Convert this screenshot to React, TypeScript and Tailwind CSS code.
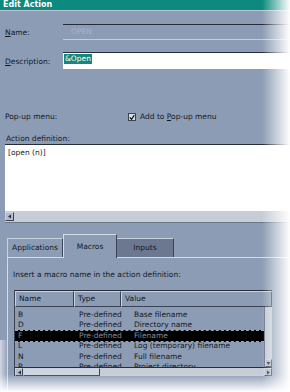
import React from 'react';

const rows = [
  { n: 'B', t: 'Pre-defined', v: 'Base filename' },
  { n: 'D', t: 'Pre-defined', v: 'Directory name' },
  { n: 'F', t: 'Pre-defined', v: 'Filename', sel: true },
  { n: 'L', t: 'Pre-defined', v: 'Log (temporary) filename' },
  { n: 'N', t: 'Pre-defined', v: 'Full filename' },
  { n: 'P', t: 'Pre-defined', v: 'Project directory' },
];

const Arrow = ({ dir }: { dir: 'left' | 'right' | 'down' }) => (
  <svg width="5" height="5" viewBox="0 0 5 5">
    {dir === 'left' && <path d="M1 2.5 L4 0.5 L4 4.5 Z" fill="#2a3040" />}
    {dir === 'right' && <path d="M4 2.5 L1 0.5 L1 4.5 Z" fill="#2a3040" />}
    {dir === 'down' && <path d="M2.5 4 L0.5 1 L4.5 1 Z" fill="#2a3040" />}
  </svg>
);

const App = () => {
  const raised = 'border-t border-l border-t-[#c9d3df] border-l-[#c9d3df] border-r border-b border-r-[#3a4254] border-b-[#3a4254]';

  return (
    <div
      className="relative w-[290px] h-[392px] overflow-hidden bg-[#8c9cb4] text-[#15191f] text-[7.5px] leading-[10px]"
      style={{ fontFamily: '"DejaVu Sans", "Liberation Sans", sans-serif' }}
    >
      {/* TITLE */}
      <div className="h-[10px] bg-[#0c8a80] border-b border-[#b9c6d4] box-content pl-[3px] text-white font-bold text-[8px] leading-[10px]">
        Edit Action
      </div>

      {/* NAME */}
      <div className="flex items-center mt-[13px] h-[16px]">
        <span className="w-[63px] pl-[5px] pt-[2px]">
          <u>N</u>ame:
        </span>
        <div className="flex-1 h-[16px] border-t border-[#262c3a] border-b border-b-[#c3ceda] pl-[8px] text-[#aab6c6] leading-[14px]">
          OPEN
        </div>
      </div>

      {/* DESCRIPTION */}
      <div className="flex items-center mt-[12px] h-[17px]">
        <span className="w-[63px] pl-[5px] pt-[2px]">
          <u>D</u>escription:
        </span>
        <div className="flex-1 h-[17px] bg-white border-t border-[#262c3a] pl-[1px] pt-[1px]">
          <span className="inline-block bg-[#14897b] text-white px-[1px] leading-[10px]">&amp;Open</span>
        </div>
      </div>

      {/* POP-UP */}
      <div className="flex items-center mt-[43px] h-[10px]">
        <span className="w-[128px] pl-[5px]">Pop-up menu:</span>
        <span className="w-[8px] h-[8px] bg-[#d5dce5] border border-[#3a4254] flex items-center justify-center">
          <svg width="7" height="7" viewBox="0 0 7 7">
            <path d="M1 3.5 L3 5.5 L6.2 0.8" stroke="#111" strokeWidth="1.4" fill="none" />
          </svg>
        </span>
        <span className="ml-[4px]">
          Add to <u>P</u>op-up menu
        </span>
      </div>

      {/* ACTION DEFINITION */}
      <div className="mt-[12px] pl-[6px] h-[10px]">Action definition:</div>
      <div className="ml-[5px] w-[285px]">
        <div className="h-[67px] bg-white border-t border-[#262c3a] pl-[3px] pt-[3px]">[open (n)]</div>
        <div className="h-[12px] bg-[#c6cdd7] flex items-center border-b border-[#6c7888]">
          <span className={`w-[9px] h-[9px] bg-[#b3bcc8] ${raised} flex items-center justify-center`}>
            <Arrow dir="left" />
          </span>
        </div>
      </div>

      {/* TABS */}
      <div className="flex items-end ml-[7px] mt-[10px] h-[24px]">
        <div className={`w-[56px] h-[19px] ${raised} border-b-0 flex items-center justify-center`}>Applications</div>
        <div className="w-[54px] h-[24px] border-t border-l border-[#d3dbe5] border-r border-r-[#3a4254] flex items-center justify-center bg-[#8c9cb4] relative top-[1px]">
          Macros
        </div>
        <div className="w-[57px] h-[19px] bg-[#6b7890] border-t border-[#c9d3df] border-r border-r-[#3a4254] flex items-center justify-center">
          Inputs
        </div>
      </div>

      {/* PANEL */}
      <div className="ml-[7px] border-t border-l border-[#d3dbe5] h-[140px]">
        <div className="pl-[5px] mt-[12px] h-[10px]">Insert a macro name in the action definition:</div>

        <div className="ml-[6px] mt-[10px] w-[258px] border-l border-[#3a4254]">
          {/* HEADER */}
          <div className="grid grid-cols-[59px_47px_1fr] h-[16px] border-t border-[#262c3a]">
            <div className={`${raised} pl-[3px] leading-[14px]`}>Name</div>
            <div className={`${raised} pl-[3px] leading-[14px]`}>Type</div>
            <div className={`${raised} pl-[3px] leading-[14px]`}>Value</div>
          </div>

          <div className="flex h-[61px] border-t border-[#262c3a]">
            <div className="flex-1 pt-[3px] overflow-hidden">
              {rows.map((r) => (
                <div
                  key={r.n}
                  className={
                    r.sel
                      ? 'grid grid-cols-[64px_55px_1fr] h-[10.4px] leading-[10.4px] bg-black text-[#7f8a99] border-y border-dashed border-[#9aa6b6] -mt-[1px] -mb-[1px] box-content'
                      : 'grid grid-cols-[64px_55px_1fr] h-[10.4px] leading-[10.4px]'
                  }
                >
                  <span className="pl-[3px]">{r.n}</span>
                  <span>{r.t}</span>
                  <span>{r.v}</span>
                </div>
              ))}
            </div>
            <div className="w-[8px] bg-[#c3cad5] border-l border-[#6c7888] flex flex-col justify-end">
              <span className={`h-[8px] bg-[#b3bcc8] ${raised} flex items-center justify-center`}>
                <Arrow dir="down" />
              </span>
            </div>
          </div>

          <div className="h-[9px] bg-[#c6cdd7] flex items-center border-t border-[#262c3a]">
            <span className={`w-[8px] h-[8px] bg-[#b3bcc8] ${raised} flex items-center justify-center`}>
              <Arrow dir="left" />
            </span>
            <span className={`w-[77px] h-[8px] bg-[#cfd5de] ${raised}`} />
            <span className="flex-1" />
            <span className={`w-[8px] h-[8px] bg-[#b3bcc8] ${raised} flex items-center justify-center`}>
              <Arrow dir="right" />
            </span>
          </div>
        </div>
      </div>

      {/* FADED EDGES */}
      <div className="absolute right-0 top-0 w-[28px] h-full bg-linear-to-r from-transparent to-white" />
      <div className="absolute left-0 bottom-0 w-full h-[18px] bg-linear-to-b from-transparent to-white" />
      <div className="absolute left-0 top-[340px] w-[8px] h-[52px] bg-linear-to-l from-transparent to-white/60" />
    </div>
  );
};

export default App;
